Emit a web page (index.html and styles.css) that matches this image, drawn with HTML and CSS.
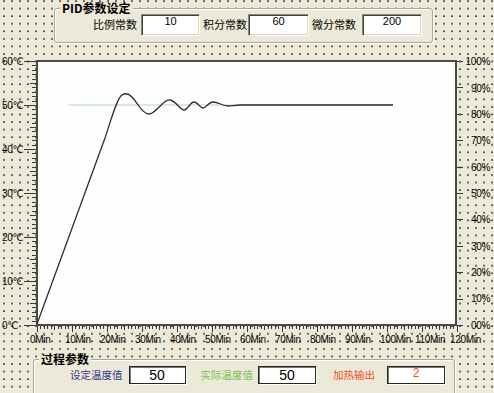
FILE: index.html
```html
<!DOCTYPE html>
<html>

<head lang="zh">
    <meta charset="UTF-8">
    <title>PID温度控制</title>
    <link rel="stylesheet" href="styles.css">
</head>

<body>
    <fieldset class="group group-pid">
        <legend>PID参数设定</legend>
        <div class="row">
            <span class="lbl lbl-p">比例常数</span>
            <div class="box box-p">10</div>
            <span class="lbl lbl-i">积分常数</span>
            <div class="box box-i">60</div>
            <span class="lbl lbl-d">微分常数</span>
            <div class="box box-d">200</div>
        </div>
    </fieldset>

    <svg class="chart" width="494" height="303" viewBox="0 50 494 303">
        <rect class="plot" x="37" y="61" width="419" height="264" />
        <path class="set-line" d="M68,105H393" />
        <path class="pv-line" d="M37,324 L105,138 C111,120 117,98 122,95 C125,93 128,93 132,97 C139,105 143,114 149,114 C156,114 163,99 170,100 C176,101 180,110 184,110 C188,110 190,102 194,102 C198,102 200,108 203,108 C206,108 209,102 213,102 C218,102 223,106 228,106 C232,106 235,105 240,105 L393,105" />
        <path class="ticks" id="ticks" d="" />

        <g class="axis-text">
            <text x="2" y="65">60℃</text>
            <text x="2" y="109">50℃</text>
            <text x="2" y="153">40℃</text>
            <text x="2" y="197">30℃</text>
            <text x="2" y="241">20℃</text>
            <text x="2" y="285">10℃</text>
            <text x="2" y="329">0℃</text>
        </g>
        <g class="axis-text right">
            <text x="490" y="65">100%</text>
            <text x="490" y="92">90%</text>
            <text x="490" y="118">80%</text>
            <text x="490" y="144">70%</text>
            <text x="490" y="171">60%</text>
            <text x="490" y="197">50%</text>
            <text x="490" y="223">40%</text>
            <text x="490" y="250">30%</text>
            <text x="490" y="276">20%</text>
            <text x="490" y="302">10%</text>
            <text x="490" y="329">00%</text>
        </g>
        <g class="axis-text">
            <text x="30" y="343">0Min</text>
            <text x="65" y="343">10Min</text>
            <text x="100" y="343">20Min</text>
            <text x="135" y="343">30Min</text>
            <text x="170" y="343">40Min</text>
            <text x="205" y="343">50Min</text>
            <text x="240" y="343">60Min</text>
            <text x="275" y="343">70Min</text>
            <text x="310" y="343">80Min</text>
            <text x="345" y="343">90Min</text>
            <text x="380" y="343">100Min</text>
            <text x="415" y="343">110Min</text>
            <text x="450" y="343">120Min</text>
        </g>
    </svg>

    <fieldset class="group group-proc">
        <legend>过程参数</legend>
        <div class="row">
            <span class="lbl lbl-set">设定温度值</span>
            <div class="box2 box-set">50</div>
            <span class="lbl lbl-act">实际温度值</span>
            <div class="box2 box-act">50</div>
            <span class="lbl lbl-out">加热输出</span>
            <div class="box2 box-out">2</div>
        </div>
    </fieldset>

    <script>
        //刻度线
        var d = '';
        var i, y, x, x0, y1;

        //左边 温度 0-60
        for (i = 0; i <= 60; i++) {
            y = Math.round(325 - i * 4.4) + 0.5;
            x0 = i % 10 == 0 ? 24 : (i % 5 == 0 ? 30 : 32);
            d += 'M' + x0 + ',' + y + 'H36';
        }

        //右边 百分比
        for (i = 0; i <= 10; i++) {
            y = Math.round(325 - i * 26.4) + 0.5;
            d += 'M457,' + y + 'H463';
        }

        //下面 时间 0-120
        for (i = 0; i <= 120; i++) {
            x = Math.round(36.5 + i * 3.5) + 0.5;
            y1 = i % 10 == 0 ? 332 : (i % 5 == 0 ? 330 : 329);
            d += 'M' + x + ',326V' + y1;
        }

        document.getElementById('ticks').setAttribute('d', d);
    </script>
</body>

</html>
```

FILE: styles.css
```css
/*初始化*/
body {
    margin: 0;
    width: 494px;
    height: 393px;
    overflow: hidden;
    background-color: #ece9d8;
    background-image: radial-gradient(circle at 4px 1px, #2e2e2e 0.6px, transparent 0.9px);
    background-size: 8px 7.57px;
    font: 11px/1.2 "Noto Sans CJK SC", sans-serif;
    color: #000;
}

/*分组框*/
.group {
    box-sizing: border-box;
    min-inline-size: 0;
    background: #ece9d8;
    border: 1px solid #a9a797;
    border-radius: 3px;
    box-shadow: inset 1px 1px #fff, 1px 1px #fff;
}

.group legend {
    margin-left: 5px;
    padding: 0 2px;
    font: bold 12px/12px "Noto Sans CJK SC", sans-serif;
    background: #ece9d8;
}

.group-pid {
    width: 379px;
    margin: 2px 0 0 54px;
    padding: 0 0 6px 0;
}

.group-proc {
    width: 422px;
    margin: 0 0 0 33px;
    padding: 1px 0 12px 0;
}

.row {
    display: flex;
    align-items: center;
}

.group-pid .row {
    height: 22px;
    padding-left: 38px;
}

.group-proc .row {
    height: 18px;
    padding-left: 36px;
}

.lbl {
    white-space: nowrap;
}

/*上面的输入框*/
.box {
    box-sizing: border-box;
    height: 22px;
    background: #fff;
    border: 1px solid;
    border-color: #8a887c #fff #fff #8a887c;
    box-shadow: inset 1px 1px #404040, inset -1px -1px #d8d4c6;
    text-align: center;
    font: 11px/11px "Liberation Sans", sans-serif;
    padding-top: 1px;
}

.box-p {
    width: 59px;
    margin-left: 4px;
}

.lbl-i {
    margin-left: 3px;
}

.box-i {
    width: 61px;
    margin-left: 1px;
}

.lbl-d {
    margin-left: 3px;
}

.box-d {
    width: 60px;
    margin-left: 6px;
}

/*下面的输入框*/
.group-proc .lbl {
    font-size: 10.5px;
}

.box2 {
    box-sizing: border-box;
    height: 18px;
    background: #fff;
    border: 1px solid #262626;
    box-shadow: inset 1px 1px #7a7a7a, 1px 1px #fff;
    text-align: center;
    font: 14px/16px "Liberation Sans", sans-serif;
}

.lbl-set {
    color: #34388a;
}

.box-set {
    width: 57px;
    margin-left: 6px;
}

.lbl-act {
    color: #7cc25c;
    margin-left: 15px;
}

.box-act {
    width: 58px;
    margin-left: 5px;
}

.lbl-out {
    color: #f0502a;
    margin-left: 17px;
}

.box-out {
    width: 58px;
    margin-left: 12px;
    color: #f0502a;
    font-size: 12px;
    line-height: 12px;
}

/*曲线图*/
.chart {
    display: block;
    margin-top: 7px;
}

.plot {
    fill: #fefefc;
    stroke: #4a4a4a;
    stroke-width: 2;
}

.set-line {
    fill: none;
    stroke: #c4e2ea;
    stroke-width: 1.5;
}

.pv-line {
    fill: none;
    stroke: #2f2f2f;
    stroke-width: 1.3;
}

.ticks {
    fill: none;
    stroke: #3a3a3a;
    stroke-width: 1;
    shape-rendering: crispEdges;
}

.axis-text {
    font-family: "Liberation Sans", "DejaVu Sans", sans-serif;
    font-size: 10px;
    letter-spacing: -0.3px;
    fill: #000;
}

.axis-text.right {
    text-anchor: end;
}
```
